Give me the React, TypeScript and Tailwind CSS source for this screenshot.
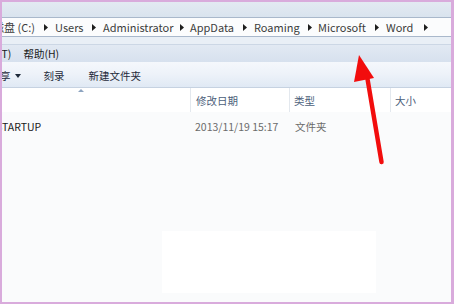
const font = { fontFamily: '"Noto Sans CJK SC", "Noto Sans", sans-serif' };

function Chevron({ w }: { w: number }) {
  return (
    <span className="shrink-0 flex items-center" style={{ width: w }}>
      <svg width="4" height="7" viewBox="0 0 4 7">
        <path d="M0 0 L4 3.5 L0 7 Z" fill="#1e1e1e" />
      </svg>
    </span>
  );
}

// label, box width (to next chevron), chevron box width
const crumbs: [string, number, number][] = [
  ['磁盘 (C:)', 51, 11],
  ['Users', 37, 11],
  ['Administrator', 77, 10],
  ['AppData', 53, 11],
  ['Roaming', 54, 10],
  ['Microsoft', 57, 11],
  ['Word', 38, 10],
];

export default function App() {
  return (
    <div
      className="w-[454px] h-[304px] overflow-hidden bg-[#d9abdc] pl-[2px] pt-[2px] pr-[3px] pb-[2px]"
      style={font}
    >
      <div className="relative w-full h-full overflow-hidden bg-[#fafbfc] flex flex-col text-[10.5px] leading-none">
        {/* Title strip */}
        <div className="h-[15px] bg-gradient-to-b from-[#e3eaf2] to-[#d9e3ee]" />

        {/* Address bar */}
        <div className="h-[20px] bg-[#fbfcfd] border-y border-[#a9b8cb] flex items-center text-[#3c3c3c] text-[11px]">
          <div className="flex items-center -ml-[9px]">
            {crumbs.map(([label, w, cw]) => (
              <div key={label} className="flex items-center">
                <span className="whitespace-nowrap shrink-0" style={{ width: w }}>{label}</span>
                <Chevron w={cw} />
              </div>
            ))}
          </div>
        </div>

        {/* Spacer band */}
        <div className="h-[7px] bg-[#e9eff6]" />

        {/* Menu bar */}
        <div className="h-[18px] bg-gradient-to-b from-[#e2e9f3] to-[#d7e1ee] border-t border-[#ccd7e5] flex items-center pt-[1px] text-[#1a1a1a]">
          <span className="-ml-[4px]">(T)</span>
          <span className="ml-[12px]">帮助(H)</span>
        </div>

        {/* Toolbar */}
        <div className="h-[26px] bg-gradient-to-b from-[#f5f8fc] via-[#edf2f9] to-[#e0e9f4] border-b border-[#c6d2e1] flex items-center pt-[3px] text-[#1e2a3a]">
          <span className="-ml-[2px]">享</span>
          <svg width="6" height="4" viewBox="0 0 6 4" className="ml-[4px] -mt-[1px]">
            <path d="M0 0 L6 0 L3 4 Z" fill="#1e2a3a" />
          </svg>
          <span className="ml-[23px]">刻录</span>
          <span className="ml-[24px]">新建文件夹</span>
        </div>

        {/* Column header */}
        <div className="relative h-[24px] bg-white flex text-[#4c607a]">
          <svg width="6" height="3" viewBox="0 0 6 3" className="absolute left-[76px] top-[1px]">
            <path d="M0 3 L3 0 L6 3 Z" fill="#8da4c0" />
          </svg>
          <div className="w-[188px]" />
          <div className="w-[99px] border-l border-[#e3e8ee] flex items-center pt-[3px] pl-[5px]">修改日期</div>
          <div className="w-[101px] border-l border-[#e3e8ee] flex items-center pt-[3px] pl-[4px]">类型</div>
          <div className="flex-1 border-l border-[#e3e8ee] flex items-center pt-[3px] pl-[4px]">大小</div>
        </div>

        {/* Row */}
        <div className="h-[26px] flex items-center pt-[4px]">
          <div className="w-[188px] shrink-0 text-[#1a1a1a] -ml-[6px]">STARTUP</div>
          <div className="w-[111px] shrink-0 text-[#6b6b6b] pl-[11px] whitespace-nowrap">2013/11/19 15:17</div>
          <div className="text-[#6b6b6b]">文件夹</div>
        </div>

        {/* Empty list area */}
        <div className="flex-1 flex flex-col">
          <div className="h-[93px]" />
          <div className="ml-[160px] w-[214px] h-[62px] bg-white" />
        </div>

        {/* Red arrow annotation */}
        <svg
          className="absolute left-0 top-0 pointer-events-none"
          width="449"
          height="300"
          viewBox="0 0 449 300"
        >
          <line x1="365" y1="74" x2="379.5" y2="160" stroke="#f20d0d" strokeWidth="4.5" strokeLinecap="round" />
          <path d="M357 53 L372 76 L352 80 Z" fill="#f20d0d" />
        </svg>
      </div>
    </div>
  );
}
